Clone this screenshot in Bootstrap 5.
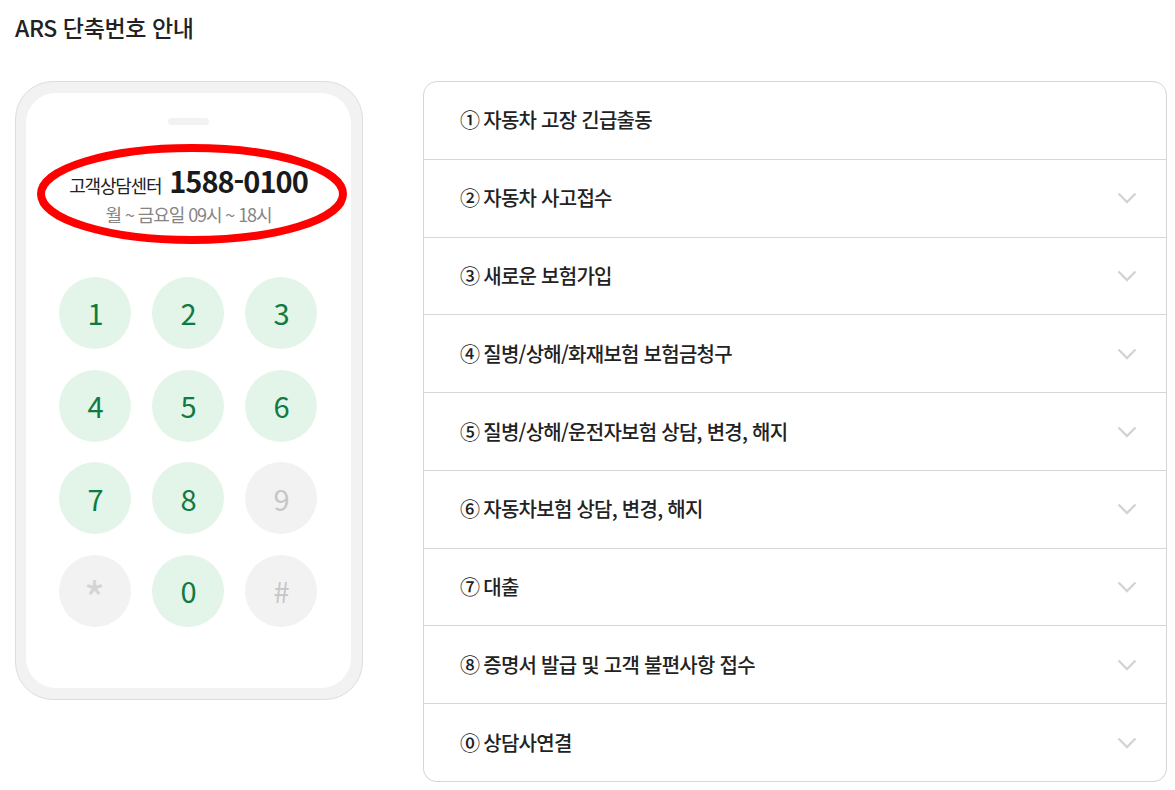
<!DOCTYPE html>
<html lang="ko">
<head>
  <meta charset="UTF-8">
  <title>ARS 단축번호 안내</title>
  <link href="https://cdn.jsdelivr.net/npm/bootstrap@5.3.2/dist/css/bootstrap.min.css" rel="stylesheet">
  <style>
    body { font-family: "Noto Sans CJK KR", "Noto Sans", sans-serif; color: #222; background: #fff; overflow: hidden; }
    .page-wrap { padding: 10px 8px 0 15px; }
    .page-title { font-size: 23px; font-weight: 500; line-height: 34px; letter-spacing: -0.4px; margin: 0 0 37px; color: #222; }
    .phone-frame { position: relative; width: 348px; height: 619px; flex: none; margin-right: 60px; background: #f2f2f2; border: 1px solid #ddd; border-radius: 38px; padding: 11px 11px 11px 10px; }
    .phone-screen { height: 100%; background: #fff; border-radius: 30px; padding-top: 25px; }
    .phone-notch { width: 41px; height: 7px; border-radius: 4px; background: #f2f2f2; margin: 0 auto 40px; }
    .call-line { line-height: 31px; letter-spacing: -1.2px; color: #222; font-size: 18px; }
    .call-line strong { font-size: 29px; font-weight: 700; letter-spacing: -1px; color: #1a1a1a; margin-left: 4px; }
    .call-hours { font-size: 18px; line-height: 26px; letter-spacing: -1.1px; color: #858585; }
    .dial-pad { display: grid; grid-template-columns: repeat(3, 72px); gap: 20.67px 21px; justify-content: center; margin-top: 50px; padding-right: 2px; }
    .dial-key { height: 72px; border-radius: 50%; font-size: 29px; padding-left: 2px; font-family: "Noto Sans CJK KR", sans-serif; }
    .dial-on { background: #e3f4e9; color: #0f7a43; }
    .dial-off { background: #f2f2f2; color: #c6c6c8; }
    .dial-star { font-size: 46px; padding-top: 14px; padding-left: 0; color: #d4d4d6; }
    .call-circle { position: absolute; left: 21px; top: 62px; width: 310px; height: 100px; }
    .menu-list { flex: 1; border-radius: 14px; border-color: #d6d6d6; height: 701px; }
    .menu-list .list-group-item { flex: 1; border-color: #d6d6d6; padding: 0 29px 0 36px; font-size: 20px; font-weight: 500; letter-spacing: -0.74px; color: #222; }
    .menu-num { margin-right: 4px; }
    .menu-arrow { width: 20px; height: 12px; }
  </style>
</head>
<body>
  <div class="page-wrap">
    <h2 class="page-title">ARS 단축번호 안내</h2>
    <div class="d-flex align-items-start">
      <div class="phone-frame">
        <div class="phone-screen text-center">
          <div class="phone-notch"></div>
          <div class="call-line">고객상담센터 <strong>1588-0100</strong></div>
          <div class="call-hours">월 ~ 금요일 09시 ~ 18시</div>
          <div class="dial-pad">
            <div class="dial-key dial-on d-flex align-items-center justify-content-center">1</div>
            <div class="dial-key dial-on d-flex align-items-center justify-content-center">2</div>
            <div class="dial-key dial-on d-flex align-items-center justify-content-center">3</div>
            <div class="dial-key dial-on d-flex align-items-center justify-content-center">4</div>
            <div class="dial-key dial-on d-flex align-items-center justify-content-center">5</div>
            <div class="dial-key dial-on d-flex align-items-center justify-content-center">6</div>
            <div class="dial-key dial-on d-flex align-items-center justify-content-center">7</div>
            <div class="dial-key dial-on d-flex align-items-center justify-content-center">8</div>
            <div class="dial-key dial-off d-flex align-items-center justify-content-center">9</div>
            <div class="dial-key dial-off dial-star d-flex align-items-center justify-content-center">*</div>
            <div class="dial-key dial-on d-flex align-items-center justify-content-center">0</div>
            <div class="dial-key dial-off d-flex align-items-center justify-content-center">#</div>
          </div>
        </div>
        <svg class="call-circle" viewBox="0 0 310 100"><ellipse cx="155" cy="50" rx="151" ry="46" fill="none" stroke="#f00" stroke-width="8"/></svg>
      </div>
      <div class="list-group menu-list">
        <div class="list-group-item d-flex align-items-center justify-content-between"><span><span class="menu-num">①</span>자동차 고장 긴급출동</span></div>
        <div class="list-group-item d-flex align-items-center justify-content-between"><span><span class="menu-num">②</span>자동차 사고접수</span> <svg class="menu-arrow" viewBox="0 0 20 12"><path d="M1.5 1.5l8.5 8.5 8.5-8.5" fill="none" stroke="#d4d4d4" stroke-width="2.4"/></svg></div>
        <div class="list-group-item d-flex align-items-center justify-content-between"><span><span class="menu-num">③</span>새로운 보험가입</span> <svg class="menu-arrow" viewBox="0 0 20 12"><path d="M1.5 1.5l8.5 8.5 8.5-8.5" fill="none" stroke="#d4d4d4" stroke-width="2.4"/></svg></div>
        <div class="list-group-item d-flex align-items-center justify-content-between"><span><span class="menu-num">④</span>질병/상해/화재보험 보험금청구</span> <svg class="menu-arrow" viewBox="0 0 20 12"><path d="M1.5 1.5l8.5 8.5 8.5-8.5" fill="none" stroke="#d4d4d4" stroke-width="2.4"/></svg></div>
        <div class="list-group-item d-flex align-items-center justify-content-between"><span><span class="menu-num">⑤</span>질병/상해/운전자보험 상담, 변경, 해지</span> <svg class="menu-arrow" viewBox="0 0 20 12"><path d="M1.5 1.5l8.5 8.5 8.5-8.5" fill="none" stroke="#d4d4d4" stroke-width="2.4"/></svg></div>
        <div class="list-group-item d-flex align-items-center justify-content-between"><span><span class="menu-num">⑥</span>자동차보험 상담, 변경, 해지</span> <svg class="menu-arrow" viewBox="0 0 20 12"><path d="M1.5 1.5l8.5 8.5 8.5-8.5" fill="none" stroke="#d4d4d4" stroke-width="2.4"/></svg></div>
        <div class="list-group-item d-flex align-items-center justify-content-between"><span><span class="menu-num">⑦</span>대출</span> <svg class="menu-arrow" viewBox="0 0 20 12"><path d="M1.5 1.5l8.5 8.5 8.5-8.5" fill="none" stroke="#d4d4d4" stroke-width="2.4"/></svg></div>
        <div class="list-group-item d-flex align-items-center justify-content-between"><span><span class="menu-num">⑧</span>증명서 발급 및 고객 불편사항 접수</span> <svg class="menu-arrow" viewBox="0 0 20 12"><path d="M1.5 1.5l8.5 8.5 8.5-8.5" fill="none" stroke="#d4d4d4" stroke-width="2.4"/></svg></div>
        <div class="list-group-item d-flex align-items-center justify-content-between"><span><span class="menu-num">⓪</span>상담사연결</span> <svg class="menu-arrow" viewBox="0 0 20 12"><path d="M1.5 1.5l8.5 8.5 8.5-8.5" fill="none" stroke="#d4d4d4" stroke-width="2.4"/></svg></div>
      </div>
    </div>
  </div>
  <script src="https://cdn.jsdelivr.net/npm/bootstrap@5.3.2/dist/js/bootstrap.bundle.min.js"></script>
</body>
</html>
